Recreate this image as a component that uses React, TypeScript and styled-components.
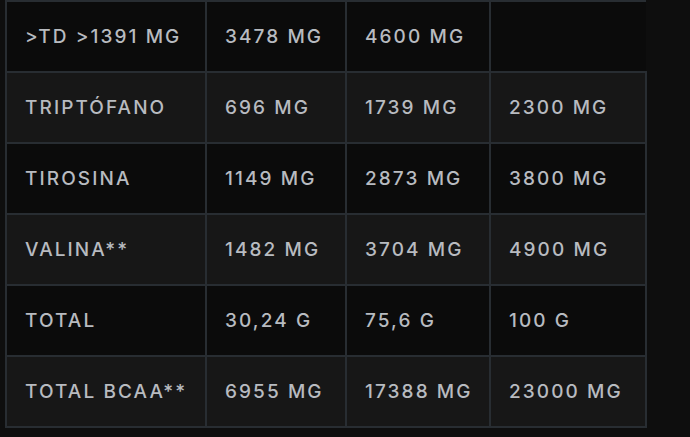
import React from "react";
import styled, { createGlobalStyle } from "styled-components";

const GlobalStyle = createGlobalStyle`
  html, body {
    margin: 0;
    padding: 0;
    background: #101010;
  }
  body {
    font-family: Inter, "Open Sans", sans-serif;
  }
`;

const Page = styled.div`
  width: 690px;
  height: 437px;
  overflow: hidden;
  padding-left: 5px;
  box-sizing: border-box;
  background: #0e0e0e;
`;

const Table = styled.table`
  border-collapse: collapse;
  table-layout: fixed;
`;

const Row = styled.tr<{ $alt?: boolean }>`
  background: ${(p) => (p.$alt ? "#171717" : "#0b0b0b")};
`;

const Cell = styled.td`
  height: 69px;
  padding: 0 0 0 18px;
  border: 2px solid #282d32;
  color: #b8bbc0;
  font-size: 19px;
  font-weight: 500;
  letter-spacing: 0.11em;
  text-transform: uppercase;
  white-space: nowrap;
  vertical-align: middle;
`;

const EmptyCell = styled.td`
  border: none;
  border-top: 2px solid #282d32;
`;

const widths = [200, 140, 144, 156];

const rows: string[][] = [
  [">TD >1391 MG", "3478 MG", "4600 MG"],
  ["Triptófano", "696 MG", "1739 MG", "2300 MG"],
  ["Tirosina", "1149 MG", "2873 MG", "3800 MG"],
  ["Valina**", "1482 MG", "3704 MG", "4900 MG"],
  ["Total", "30,24 G", "75,6 G", "100 G"],
  ["Total BCAA**", "6955 MG", "17388 MG", "23000 MG"],
];

export default function App() {
  return (
    <Page>
      <GlobalStyle />
      <Table>
        <colgroup>
          {widths.map((w, i) => (
            <col key={i} style={{ width: w }} />
          ))}
        </colgroup>
        <tbody>
          {rows.map((r, i) => (
            <Row key={i} $alt={i % 2 === 1}>
              {r.map((c, j) => (
                <Cell key={j}>{c}</Cell>
              ))}
              {r.length < 4 && <EmptyCell />}
            </Row>
          ))}
        </tbody>
      </Table>
    </Page>
  );
}
